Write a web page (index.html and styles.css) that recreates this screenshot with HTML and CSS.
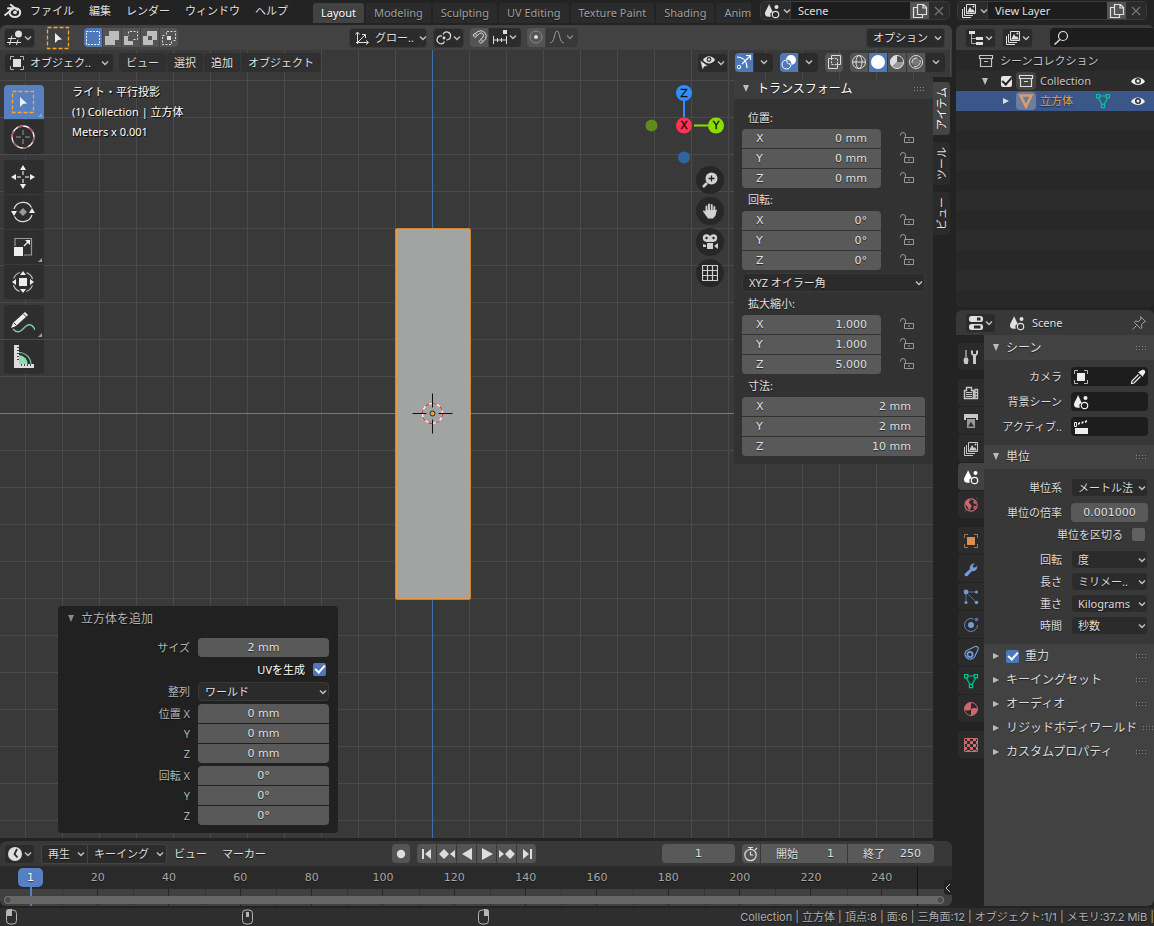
FILE: index.html
```html
<!DOCTYPE html>
<html lang="ja">
<head>
<meta charset="utf-8">
<title>Blender</title>
<link rel="stylesheet" href="styles.css">
</head>
<body>
<svg class="sprite" aria-hidden="true">
  <symbol id="chev" viewBox="0 0 8 8"><path d="M1 2.500 4 5.500 7 2.500" fill="none" stroke="currentColor" stroke-width="1.500"/></symbol>
  <symbol id="logo" viewBox="0 0 16 16"><path d="M1 11.500 8.500 5.500H3.500M6 2.500l6 4.600" fill="none" stroke="currentColor" stroke-width="1.700" stroke-linecap="round"/><ellipse cx="9.700" cy="9.300" rx="4.700" ry="4" fill="none" stroke="currentColor" stroke-width="1.900"/><circle cx="9.800" cy="9.200" r="1.700" fill="currentColor"/></symbol>
  <symbol id="view3d" viewBox="0 0 16 16"><path d="M1 8.500h8M0 12.500h14M5 5.500 2.500 15M11 9.500 9.500 15" fill="none" stroke="currentColor"/><circle cx="11.500" cy="4" r="3.500" fill="currentColor"/></symbol>
  <symbol id="selbox" viewBox="0 0 24 24"><rect x="1.500" y="1.500" width="21" height="21" fill="none" stroke="#f9a62c" stroke-width="1.300" stroke-dasharray="4 2"/><path d="M9 7v10l3-3 4-.5z" fill="#eee"/></symbol>
  <symbol id="m1" viewBox="0 0 16 16"><rect x="1.500" y="1.500" width="13" height="13" fill="none" stroke="currentColor" stroke-dasharray="2 1.250"/></symbol>
  <symbol id="m2" viewBox="0 0 16 16"><path d="M1 15V6h4V1h10v9h-4v5z" fill="#bdbdbd"/></symbol>
  <symbol id="m3" viewBox="0 0 16 16"><path d="M10.500 9.500h4v-8h-9v4" fill="none" stroke="currentColor" stroke-dasharray="2 1.500"/><path d="M1 15V6h4v5h5v4z" fill="#bdbdbd"/></symbol>
  <symbol id="m4" viewBox="0 0 16 16"><path d="M1 15V6h4V1h10v9h-4v5zM6 6v4h4V6z" fill="#bdbdbd" fill-rule="evenodd"/></symbol>
  <symbol id="m5" viewBox="0 0 16 16"><path d="M5.500 4.500v-3h9v9h-3M10.500 11.500v3h-9v-9h3" fill="none" stroke="currentColor" stroke-dasharray="2 1.500"/><path d="M6 6h4v4H6z" fill="currentColor"/></symbol>
  <symbol id="orient" viewBox="0 0 16 16"><path d="M3.500 14V3M2 12.500h12M4 12l7-7M1.500 4.500l2-2.500 2 2.500M12 10.500l2.500 2-2.500 2M8 4.500h3.500V8" fill="none" stroke="currentColor"/></symbol>
  <symbol id="pivot" viewBox="0 0 16 16"><g fill="none" stroke="currentColor" stroke-width="1.200"><path d="M8.500 11.500A3.900 3.900 0 1 1 6 6.100M7 4.500A3.900 3.900 0 1 1 10.500 9.800"/></g><circle cx="8" cy="8" r="1.400" fill="currentColor"/></symbol>
  <symbol id="magnet" viewBox="0 0 16 16"><path d="M2 6 7 2.500a5.500 5.500 0 0 1 7.500 7.500L10 14.500 8 12.500l4-4.500a2.500 2.500 0 0 0-3.500-3.500L4 8.500zM4 4.500l2 2M10 10.500l2 2" fill="none" stroke="currentColor"/></symbol>
  <symbol id="snapinc" viewBox="0 0 16 16"><path d="M1 11h14M1.500 7v8M5.500 9v4M9.500 9v4M14.500 7v8" stroke="currentColor"/><path d="M11 1h4v4h-4z" fill="currentColor"/></symbol>
  <symbol id="prop" viewBox="0 0 16 16"><circle cx="8" cy="8" r="6" fill="none" stroke="#8b8b8b"/><circle cx="8" cy="8" r="2" fill="currentColor"/></symbol>
  <symbol id="falloff" viewBox="0 0 16 16"><path d="M1 14c5 0 4-12 7-12s2 12 7 12" fill="none" stroke="currentColor"/></symbol>
  <symbol id="objmode" viewBox="0 0 16 16"><path d="M4 4h8v8H4z" fill="currentColor"/><path d="M1.500 5V1.500H5M11 1.500h3.500V5M14.500 11v3.500H11M5 14.500H1.500V11" fill="none" stroke="currentColor" opacity=".75"/></symbol>
  <symbol id="vis" viewBox="0 0 16 16"><path d="M3 5c3-5 9-5 12 0-3 4.500-9 4.500-12 0z" fill="currentColor"/><circle cx="9" cy="4.500" r="2.400" fill="#2b2b2b"/><circle cx="9" cy="4.500" r="1.200" fill="currentColor"/><path d="M0 5l8 6-3.500.500L2.500 15z" fill="currentColor" stroke="#2b2b2b" stroke-width=".6"/></symbol>
  <symbol id="gizmo" viewBox="0 0 16 16"><path d="M1 3c6 0 10 4 10 11M6 10l8-8M10 1.500h4.500V6" fill="none" stroke="currentColor" stroke-width="1.200"/><circle cx="3" cy="13" r="1.700" fill="none" stroke="currentColor"/></symbol>
  <symbol id="overlay" viewBox="0 0 16 16"><circle cx="10" cy="6" r="5" fill="currentColor"/><circle cx="5.500" cy="10.500" r="4.500" fill="none" stroke="currentColor"/><path d="M5.200 6a4.500 4.500 0 0 1 4.800 5" fill="none" stroke="#5078b9"/><circle cx="8" cy="8" r="1.600" fill="#5078b9"/></symbol>
  <symbol id="xray" viewBox="0 0 16 16"><path d="M5.500 1.500h9v9h-3v4h-9v-10h3z" fill="none" stroke="currentColor"/><path d="M5.500 4.500h6v6h-6z" fill="none" stroke="currentColor" stroke-dasharray="2 1.200"/></symbol>
  <symbol id="wire" viewBox="0 0 16 16"><g fill="none" stroke="currentColor"><circle cx="8" cy="8" r="6.500"/><ellipse cx="8" cy="8" rx="3" ry="6.500"/><path d="M1.500 8h13"/></g></symbol>
  <symbol id="solid" viewBox="0 0 16 16"><circle cx="8" cy="8" r="7" fill="#fff"/></symbol>
  <symbol id="matprev" viewBox="0 0 16 16"><circle cx="8" cy="8" r="6.500" fill="none" stroke="currentColor"/><path d="M8 8V1.500A6.500 6.500 0 0 0 3 12.500z" fill="currentColor"/><path d="M8 8h6.500A6.500 6.500 0 0 1 3 12.500z" fill="currentColor" opacity=".5"/></symbol>
  <symbol id="rend" viewBox="0 0 16 16"><circle cx="8" cy="8" r="6.500" fill="none" stroke="currentColor"/><circle cx="7.500" cy="7.500" r="4" fill="#777"/><path d="M4 9a4.500 4.500 0 0 1 5-5M12 6a5 5 0 0 1-6 6.500" fill="none" stroke="currentColor"/></symbol>
  <symbol id="scene" viewBox="0 0 16 16"><path d="M5 1 9 9.500C6 9 6 11.500 7 13.500 3 14.500 1 13 1 10.500 1 8 4 5 5 1z" fill="currentColor"/><circle cx="11.500" cy="11.500" r="3.200" fill="none" stroke="currentColor" stroke-width="1.200"/><circle cx="12.500" cy="4" r="2" fill="currentColor"/></symbol>
  <symbol id="layers" viewBox="0 0 16 16"><path d="M5.500 1.500h9v9h-9zM3.500 4v8.500H12M1.500 6v8.500H10" fill="none" stroke="currentColor"/><path d="M6 9.500 9 4l2 3 1-1 2 3.500z" fill="currentColor"/><circle cx="12.500" cy="3.500" r="1" fill="currentColor"/></symbol>
  <symbol id="copy" viewBox="0 0 16 16"><path d="M5.500 1.500h6l3 3v7h-9zM11 1.500V5h3.500M5.500 4.500h-4v10h9v-3" fill="none" stroke="currentColor" stroke-width="1.200"/></symbol>
  <symbol id="x" viewBox="0 0 16 16"><path d="M4 4l8 8M12 4l-8 8" stroke="#777" stroke-width="1.200"/></symbol>
  <symbol id="tree" viewBox="0 0 16 16"><path d="M1 1h6v3H1zM8 7h7v3H8zM8 12h7v3H8z" fill="currentColor"/><path d="M3.500 4v9.500H8M3.500 8.500H8" fill="none" stroke="currentColor" opacity=".7"/></symbol>
  <symbol id="search" viewBox="0 0 16 16"><circle cx="10" cy="6" r="4.500" fill="none" stroke="currentColor" stroke-width="1.200"/><path d="M7 9.500 1.500 14.500" stroke="currentColor" stroke-width="1.500"/></symbol>
  <symbol id="coll" viewBox="0 0 16 16"><path d="M1.500 2.500h13v3h-13zM2.500 5.500h11v8h-11zM6 8.500h4" fill="none" stroke="currentColor" stroke-width="1.200"/></symbol>
  <symbol id="eye" viewBox="0 0 16 16"><path d="M1 8.500c3-5.500 11-5.500 14 0-3 4.500-11 4.500-14 0z" fill="currentColor"/><circle cx="8" cy="8" r="3" fill="#2e2e38"/><circle cx="8" cy="8" r="1.500" fill="currentColor"/></symbol>
  <symbol id="mesh" viewBox="0 0 16 16"><g fill="none" stroke="#00c798" stroke-width="1.200"><path d="M5 3h6M3.300 5 7 11.500M12.700 5 9 11.500"/><path d="M1.500 1.500h3.300v3.300H1.500zM11.200 1.500h3.300v3.300h-3.300zM6.400 11.400h3.200v3.200H6.400z"/></g></symbol>
  <symbol id="objmesh" viewBox="0 0 16 16"><path d="M2.500 2.500h11L8 13.500z" fill="none" stroke="#dd9a6c" stroke-width="2.600"/></symbol>
  <symbol id="lock" viewBox="0 0 16 16"><path d="M1.500 5.500V5a2.500 2.500 0 0 1 5 0v2.500M5.500 7.500h9v5h-9zM10 9v2" fill="none" stroke="currentColor"/></symbol>
  <symbol id="props" viewBox="0 0 16 16"><rect x="1" y="1" width="14" height="6" rx="2.500" fill="currentColor"/><rect x="1" y="9" width="14" height="6" rx="2.500" fill="currentColor"/><path d="M9 2.500h3.500v3H9zM6 10.500h6.500v3H6z" fill="#2b2b2b"/></symbol>
  <symbol id="pin" viewBox="0 0 16 16"><path d="M9.500 1.500l5 5-1.500.5-2.500 2.500.5 3-1.500 1-6-6 1-1.500 3 .5L10 4zM5.500 10.500l-4 4" fill="none" stroke="#a0a0a0"/></symbol>
  <symbol id="drop" viewBox="0 0 16 16"><path d="M8.500 5.500 2 12l-.5 2.500L4 14l6.500-6.500" fill="none" stroke="currentColor" stroke-width="1.200"/><path d="M8 3l1.200-.500L12 1c2-1 4 1 3 3l-1.800 2.500L13 8z" fill="currentColor"/></symbol>
  <symbol id="clap" viewBox="0 0 16 16"><path d="M1.500 7.500v-4h2v4z" fill="none" stroke="currentColor"/><path d="M2 9h13v6H2zM5 4l2-1v2L5 6zM8.500 3l2-1v2l-2 1zM12 2l2-1v2l-2 1z" fill="currentColor"/></symbol>
  <symbol id="tools" viewBox="0 0 16 16"><path d="M3 1v7" stroke="currentColor" stroke-width="1.200"/><path d="M1.500 8.500h3L5.500 11l-.7 4H1.300L.5 11z" fill="currentColor"/><path d="M8 1v4l2 2v8h3V7l2-2V1l-2 1v3h-3V2z" fill="currentColor"/></symbol>
  <symbol id="camback" viewBox="0 0 16 16"><path d="M1.500 5.500h2v-3h5v3h2v8h-9zM12 4.500h2.500v9H12z" fill="none" stroke="currentColor" stroke-width="1.400"/><path d="M3 7.500h6M3 9.500h6M3 11.500h6M12 7.500h2M12 10.500h2" stroke="currentColor"/></symbol>
  <symbol id="printer" viewBox="0 0 16 16"><path d="M1 1h14v6h-2V5H3v2H1z" fill="currentColor"/><path d="M4 6h8v9H4z" fill="currentColor" opacity=".7"/><path d="M5 13.500 8 9l3 4.500z" fill="#2b2b2b"/></symbol>
  <symbol id="world" viewBox="0 0 16 16"><circle cx="8" cy="8" r="6.200" fill="none" stroke="currentColor" stroke-width="1.200"/><path d="M3 4c1-1.500 4-2 4-.5L5.500 5.500 7 7l1.500 2L7 12l-1 1-1-3-2.500-2.500zM11 3.500l2 2-.5 1.500-2-1zM11 9l2 .5-1.500 2.500-1-1zM13 2l1.500-1M1.500 15 3 13" fill="currentColor" stroke="currentColor" stroke-width=".4"/></symbol>
  <symbol id="wrench" viewBox="0 0 16 16"><path d="M2 12.500 7 8c-.8-3 1.500-6 5-5.500L9.500 5l1.500 2 3-2c1 3-2 6-5 5L4.500 15C2.500 16 .5 14 2 12.500z" fill="currentColor"/></symbol>
  <symbol id="part" viewBox="0 0 16 16"><path d="M3 3h11M3 3v11M3 3l11 11" stroke="currentColor" opacity=".6"/><circle cx="3" cy="3" r="2.400" fill="currentColor"/><circle cx="13.500" cy="3" r="1.500" fill="currentColor"/><circle cx="3" cy="13.500" r="1.500" fill="currentColor"/><circle cx="13.500" cy="13.500" r="1.800" fill="currentColor"/></symbol>
  <symbol id="phys" viewBox="0 0 16 16"><path d="M10.500 2a6.500 6.500 0 1 0 4 6" fill="none" stroke="currentColor" opacity=".8"/><circle cx="8" cy="8" r="3" fill="currentColor"/><circle cx="13.500" cy="2.500" r="1.800" fill="currentColor" opacity=".7"/></symbol>
  <symbol id="constr" viewBox="0 0 16 16"><path d="M3 6 12 1.500a2.300 2.300 0 0 1 3 3L11.500 12A5 5 0 1 1 3 6z" fill="none" stroke="currentColor" stroke-width="1.200"/><circle cx="7" cy="9.500" r="2.600" fill="none" stroke="currentColor" stroke-width="1.800"/></symbol>
  <symbol id="mat" viewBox="0 0 16 16"><circle cx="8" cy="8" r="6.500" fill="none" stroke="currentColor"/><path d="M8 8V1.500A6.500 6.500 0 0 0 1.500 8C3 10 6 10 8 8zM8 8v6.500A6.500 6.500 0 0 0 14.500 8C13 6.500 10 6.500 8 8z" fill="currentColor"/></symbol>
  <symbol id="tex" viewBox="0 0 16 16"><path d="M1.500 1.500h13v13h-13z" fill="none" stroke="currentColor"/><path d="M4 1h3v3H4zM10 1h3v3h-3zM1 4h3v3H1zM7 4h3v3H7zM13 4h2v3h-2zM4 7h3v3H4zM10 7h3v3h-3zM1 10h3v3H1zM7 10h3v3H7zM13 10h2v3h-2zM4 13h3v2H4zM10 13h3v2h-3z" fill="currentColor"/></symbol>
  <symbol id="clock" viewBox="0 0 16 16"><circle cx="8" cy="8" r="7" fill="currentColor"/><path d="M10 3 7.500 8l3 3.500" fill="none" stroke="#2b2b2b" stroke-width="1.800"/></symbol>
  <symbol id="watch" viewBox="0 0 16 16"><circle cx="7.500" cy="9" r="5.700" fill="none" stroke="currentColor" stroke-width="1.200"/><path d="M5 1.500h5M7.500 1.500V3M7.500 5.500V9h3M12 4l2-2" fill="none" stroke="currentColor" stroke-width="1.200"/></symbol>
</svg>

<div class="app">
  <header class="topbar">
    <svg class="ic logo"><use href="#logo"/></svg>
    <nav class="menus">
      <button>ファイル</button><button>編集</button><button>レンダー</button><button>ウィンドウ</button><button>ヘルプ</button>
    </nav>
    <nav class="tabs">
      <button class="on">Layout</button><button>Modeling</button><button>Sculpting</button><button>UV Editing</button><button>Texture Paint</button><button>Shading</button><button>Animation</button>
    </nav>
    <div class="idbox">
      <button class="pick" aria-label="シーン"><svg class="ic"><use href="#scene"/></svg><svg class="chev"><use href="#chev"/></svg></button>
      <input aria-label="シーン名" value="Scene">
      <button class="dup" aria-label="複製"><svg class="ic"><use href="#copy"/></svg></button>
      <button class="del" aria-label="削除"><svg class="ic"><use href="#x"/></svg></button>
    </div>
    <div class="idbox">
      <button class="pick" aria-label="ビューレイヤー"><svg class="ic"><use href="#layers"/></svg><svg class="chev"><use href="#chev"/></svg></button>
      <input aria-label="ビューレイヤー名" value="View Layer">
      <button class="dup" aria-label="複製"><svg class="ic"><use href="#copy"/></svg></button>
      <button class="del" aria-label="削除"><svg class="ic"><use href="#x"/></svg></button>
    </div>
  </header>

  <main class="work">
    <div class="left">
      <section class="view3d">
        <div class="bar tool-bar">
          <button class="dd icon-dd" aria-label="エディタータイプ"><svg class="ic"><use href="#view3d"/></svg><svg class="chev"><use href="#chev"/></svg></button>
          <svg class="active-tool"><use href="#selbox"/></svg>
          <div class="grp modes">
            <button class="on" aria-label="設定"><svg class="ic"><use href="#m1"/></svg></button><button aria-label="拡張"><svg class="ic"><use href="#m2"/></svg></button><button aria-label="減算"><svg class="ic"><use href="#m3"/></svg></button><button aria-label="反転"><svg class="ic"><use href="#m4"/></svg></button><button aria-label="交差"><svg class="ic"><use href="#m5"/></svg></button>
          </div>
          <div class="transforms">
            <button class="dd orient"><svg class="ic"><use href="#orient"/></svg><span>グロー..</span><svg class="chev"><use href="#chev"/></svg></button>
            <button class="dd icon-dd" aria-label="ピボット"><svg class="ic"><use href="#pivot"/></svg><svg class="chev"><use href="#chev"/></svg></button>
            <div class="grp"><button aria-label="スナップ"><svg class="ic"><use href="#magnet"/></svg></button><button class="dd wide" aria-label="スナップ先"><svg class="ic"><use href="#snapinc"/></svg><svg class="chev"><use href="#chev"/></svg></button></div>
            <div class="grp faded"><button aria-label="プロポーショナル編集"><svg class="ic"><use href="#prop"/></svg></button><button class="dd wide" aria-label="減衰"><svg class="ic"><use href="#falloff"/></svg><svg class="chev"><use href="#chev"/></svg></button></div>
          </div>
          <button class="dd options"><span>オプション</span><svg class="chev"><use href="#chev"/></svg></button>
        </div>

        <div class="canvas">
          <svg class="scene" aria-hidden="true">
            <defs><pattern id="grid" x="25" y="30" width="37" height="37" patternUnits="userSpaceOnUse"><path d="M.5 0v37M0 .5h37" stroke="#4a4a4a" fill="none"/></pattern></defs>
            <rect width="100%" height="100%" fill="#393939"/>
            <rect width="100%" height="100%" fill="url(#grid)"/>
            <path d="M0 363.500h2000" stroke="#74892f"/>
            <path d="M432.500 0v2000" stroke="#3c70af"/>
            <rect x="396" y="179" width="74" height="370" rx="1" fill="#a2a4a3" stroke="#f59a24" stroke-width="1.600"/>
            <g transform="translate(432.500 363.500)" fill="none">
              <circle r="10" stroke="#fff" stroke-width="1.200"/><circle r="10" stroke="#e0262f" stroke-width="1.200" stroke-dasharray="4 3.850"/>
              <path d="M-20 0h14M6 0h14M0-20v14M0 6v14" stroke="#111"/>
              <circle r="2.500" fill="#f79f2c" stroke="#222"/>
            </g>
          </svg>

          <div class="bar view-bar">
            <button class="dd mode"><svg class="ic"><use href="#objmode"/></svg><span>オブジェク..</span><svg class="chev"><use href="#chev"/></svg></button>
            <nav class="pills"><button>ビュー</button><button>選択</button><button>追加</button><button>オブジェクト</button></nav>
            <div class="shading">
              <button class="dd icon-dd" aria-label="可視性"><svg class="ic"><use href="#vis"/></svg><svg class="chev"><use href="#chev"/></svg></button>
              <div class="grp"><button class="on" aria-label="ギズモ"><svg class="ic"><use href="#gizmo"/></svg></button><button class="dd only" aria-label="ギズモ設定"><svg class="chev"><use href="#chev"/></svg></button></div>
              <div class="grp"><button class="on" aria-label="オーバーレイ"><svg class="ic"><use href="#overlay"/></svg></button><button class="dd only" aria-label="オーバーレイ設定"><svg class="chev"><use href="#chev"/></svg></button></div>
              <div class="grp"><button aria-label="透過"><svg class="ic"><use href="#xray"/></svg></button></div>
              <div class="grp"><button aria-label="ワイヤーフレーム"><svg class="ic"><use href="#wire"/></svg></button><button class="on" aria-label="ソリッド"><svg class="ic"><use href="#solid"/></svg></button><button aria-label="マテリアル"><svg class="ic"><use href="#matprev"/></svg></button><button aria-label="レンダー"><svg class="ic"><use href="#rend"/></svg></button><button class="dd only" aria-label="シェーディング設定"><svg class="chev"><use href="#chev"/></svg></button></div>
            </div>
          </div>

          <div class="stage">
            <div class="toolbox">
              <div class="tset">
                <button class="on more" aria-label="選択"><svg><use href="#selbox"/></svg></button>
                <button aria-label="カーソル"><svg viewBox="0 0 24 24"><g fill="none"><circle cx="12" cy="12" r="11" stroke="#eee" stroke-width="1.300"/><circle cx="12" cy="12" r="11" stroke="#b5474d" stroke-width="1.300" stroke-dasharray="5.760 5.760"/><path d="M12 5v5M12 14v5M5 12h5M14 12h5" stroke="#999"/></g></svg></button>
              </div>
              <div class="tset">
                <button aria-label="移動"><svg viewBox="0 0 24 24"><path d="M12 0l3 5H9zM12 24l3-5H9zM0 12l5-3v6zM24 12l-5-3v6z" fill="#eee"/><path d="M12 6v4M12 14v4M6 12h4M14 12h4" stroke="#bbb" stroke-width="1.500"/></svg></button>
                <button aria-label="回転"><svg viewBox="0 0 24 24"><path d="M3 9a9.500 9.500 0 0 1 17.500-1.500M21 15A9.500 9.500 0 0 1 3.500 16.500" fill="none" stroke="#ddd" stroke-width="1.200"/><path d="M0 11h6l-3 5zM18 13h6l-3-5z" fill="#eee"/><path d="M12 8l4 4-4 4-4-4z" fill="#999"/></svg></button>
                <button class="more" aria-label="拡大縮小"><svg viewBox="0 0 24 24"><path d="M4 11V3.500h16.500V20H13" fill="none" stroke="#999" stroke-width="1.200"/><path d="M3 12h9v9H3zM19 5v5l-5-5z" fill="#eee"/><path d="M13 11l4-4" stroke="#eee" stroke-width="1.300"/></svg></button>
                <button aria-label="トランスフォーム"><svg viewBox="0 0 24 24"><circle cx="12" cy="12" r="10" fill="none" stroke="#bbb" stroke-width="1.200" stroke-dasharray="9 6.700" stroke-dashoffset="-3.400"/><path d="M8 8h8v8H8zM12 1l3 4H9zM12 23l3-4H9zM1 12l4-3v6zM23 12l-4-3v6z" fill="#eee"/></svg></button>
              </div>
              <div class="tset">
                <button class="more" aria-label="アノテート"><svg viewBox="0 0 24 24"><path d="M2 19c5 6 9 1 12-2s7-4 10 3" fill="none" stroke="#7fc79f" stroke-width="1.400"/><path d="M0 18l2-5L14 2l3 3L5 16z" fill="#eee"/><path d="M3 13l2.500 2.500M12.500 4l3 3" stroke="#333"/></svg></button>
                <button aria-label="メジャー"><svg viewBox="0 0 24 24"><path d="M8 20V10a10 10 0 0 1 9 10z" fill="#8fdcb4"/><path d="M8 7.500A12 12 0 0 1 20 19" fill="none" stroke="#7fc79f" stroke-width="1.200"/><path d="M3 0h5v19h15v4H3z" fill="#ddd"/><path d="M6 2.500h2M6 5.500h2M6 8.500h2M6 11.500h2M6 14.500h2M10.500 19v2M13.500 19v2M16.500 19v2M19.500 19v2" stroke="#444"/></svg></button>
              </div>
            </div>
            <div class="info"><p>ライト・平行投影</p><p>(1) Collection | 立方体</p><p>Meters x 0.001</p></div>
            <div class="navs">
              <svg class="axes" viewBox="0 0 80 82" role="img" aria-label="軸">
                <path d="M40 12v24" stroke="#2e8fff" stroke-width="2"/><path d="M50 44.500h14" stroke="#8bdc00" stroke-width="2"/>
                <circle cx="7.500" cy="44.500" r="6" fill="#5f8a1c"/><circle cx="40" cy="76.500" r="6" fill="#30659f"/>
                <circle cx="40" cy="12" r="8" fill="#2e8fff"/><circle cx="40" cy="44.500" r="8" fill="#ff3352"/><circle cx="72" cy="44.500" r="8" fill="#8bdc00"/>
                <g class="axis-names"><text x="40" y="16">Z</text><text x="40" y="48">X</text><text x="72" y="48">Y</text></g>
              </svg>
              <button class="nav" aria-label="ズーム"><svg class="ic"><g fill="none" stroke="#d0d0d0"><path d="M5 11l-4 4" stroke-width="2.500"/></g><circle cx="9.500" cy="6.500" r="6" fill="#d0d0d0"/><path d="M9.500 3.500v6M6.500 6.500h6" stroke="#222" stroke-width="1.300"/></svg></button>
              <button class="nav" aria-label="移動"><svg class="ic"><path d="M4.500 9V3.500M7 8V1.500M9.700 8V2M12.300 9V4" stroke="#d0d0d0" stroke-width="1.900" stroke-linecap="round"/><path d="M3.600 7h9.600l1.800-.6-1.500 6-2.500 3H6L1 8.500C1 7 2.500 7 3.600 9z" fill="#d0d0d0"/></svg></button>
              <button class="nav" aria-label="カメラ"><svg class="ic"><g fill="#d0d0d0"><circle cx="4.500" cy="4" r="3.700"/><circle cx="11.500" cy="4" r="3.700"/><path d="M4 5h8v3H4zM5 9h6v6H5zM12 12l4-3v6zM1 10l3 1v2H1z"/></g><circle cx="4.500" cy="4" r="1.200" fill="#222"/><circle cx="11.500" cy="4" r="1.200" fill="#222"/></svg></button>
              <button class="nav" aria-label="投影"><svg class="ic"><path d="M.5.5h15v15H.5zM5.500.5v15M10.500.5v15M.5 5.500h15M.5 10.500h15" fill="none" stroke="#d0d0d0" stroke-width="1.200"/></svg></button>
            </div>
            <aside class="npanel">
              <h2><svg class="tri"><path d="M1 0h6L4 7z"/></svg>トランスフォーム<i class="grip"></i></h2>
              <div class="nbody">
                <h3>位置:</h3>
                <div class="locked">
                  <div class="stack"><label>X<input value="0 mm"></label><label>Y<input value="0 mm"></label><label>Z<input value="0 mm"></label></div>
                  <div class="locks"><button aria-label="Xロック"><svg class="ic"><use href="#lock"/></svg></button><button aria-label="Yロック"><svg class="ic"><use href="#lock"/></svg></button><button aria-label="Zロック"><svg class="ic"><use href="#lock"/></svg></button></div>
                </div>
                <h3>回転:</h3>
                <div class="locked">
                  <div class="stack"><label>X<input value="0°"></label><label>Y<input value="0°"></label><label>Z<input value="0°"></label></div>
                  <div class="locks"><button aria-label="Xロック"><svg class="ic"><use href="#lock"/></svg></button><button aria-label="Yロック"><svg class="ic"><use href="#lock"/></svg></button><button aria-label="Zロック"><svg class="ic"><use href="#lock"/></svg></button></div>
                </div>
                <div class="sel euler"><select aria-label="回転モード"><option>XYZ オイラー角</option></select><svg class="chev"><use href="#chev"/></svg></div>
                <h3>拡大縮小:</h3>
                <div class="locked">
                  <div class="stack"><label>X<input value="1.000"></label><label>Y<input value="1.000"></label><label>Z<input value="5.000"></label></div>
                  <div class="locks"><button aria-label="Xロック"><svg class="ic"><use href="#lock"/></svg></button><button aria-label="Yロック"><svg class="ic"><use href="#lock"/></svg></button><button aria-label="Zロック"><svg class="ic"><use href="#lock"/></svg></button></div>
                </div>
                <h3>寸法:</h3>
                <div class="stack"><label>X<input value="2 mm"></label><label>Y<input value="2 mm"></label><label>Z<input value="10 mm"></label></div>
              </div>
            </aside>
            <nav class="vtabs"><button class="on">アイテム</button><button>ツール</button><button>ビュー</button></nav>
          </div>

          <section class="redo">
            <h2><svg class="tri"><path d="M1 0h6L4 7z"/></svg>立方体を追加</h2>
            <div class="rrow"><label for="size">サイズ</label><input id="size" class="field" value="2 mm"></div>
            <div class="rcheck"><label for="uv">UVを生成</label><input id="uv" type="checkbox" checked></div>
            <div class="rrow"><label for="align">整列</label><div class="sel"><select id="align"><option>ワールド</option></select><svg class="chev"><use href="#chev"/></svg></div></div>
            <div class="rgroup">
              <label for="lx">位置 X</label><input id="lx" class="field" value="0 mm"><label for="ly">Y</label><input id="ly" class="field" value="0 mm"><label for="lz">Z</label><input id="lz" class="field" value="0 mm">
            </div>
            <div class="rgroup">
              <label for="rx">回転 X</label><input id="rx" class="field" value="0°"><label for="ry">Y</label><input id="ry" class="field" value="0°"><label for="rz">Z</label><input id="rz" class="field" value="0°">
            </div>
          </section>
        </div>
      </section>

      <section class="timeline">
        <div class="bar tl-bar">
          <button class="dd icon-dd" aria-label="タイムライン"><svg class="ic"><use href="#clock"/></svg><svg class="chev"><use href="#chev"/></svg></button>
          <div class="grp tlmenus"><button class="dd"><span>再生</span><svg class="chev"><use href="#chev"/></svg></button><button class="dd"><span>キーイング</span><svg class="chev"><use href="#chev"/></svg></button></div>
          <nav class="plain"><button>ビュー</button><button>マーカー</button></nav>
          <div class="transport">
            <div class="grp"><button aria-label="自動キー"><svg class="ic"><circle cx="8" cy="8" r="4.200" fill="currentColor"/></svg></button></div>
            <div class="grp play">
              <button aria-label="先頭"><svg class="ic"><path d="M3 3h2v10H3zM12 3v10L6 8z" fill="currentColor"/></svg></button>
              <button aria-label="前のキー"><svg class="ic"><path d="M5 3l5 5-5 5-5-5zM16 4v8l-5-4z" fill="currentColor"/></svg></button>
              <button aria-label="逆再生"><svg class="ic"><path d="M13 2v12L3 8z" fill="currentColor"/></svg></button>
              <button aria-label="再生"><svg class="ic"><path d="M3 2v12l11-6z" fill="currentColor"/></svg></button>
              <button aria-label="次のキー"><svg class="ic"><path d="M11 3l5 5-5 5-5-5zM0 4v8l5-4z" fill="currentColor"/></svg></button>
              <button aria-label="末尾"><svg class="ic"><path d="M11 3h2v10h-2zM4 3v10l6-5z" fill="currentColor"/></svg></button>
            </div>
          </div>
          <div class="frames">
            <input class="field cur" aria-label="現在のフレーム" value="1">
            <div class="grp range"><button aria-label="プレビュー範囲"><svg class="ic"><use href="#watch"/></svg></button><label>開始<input value="1"></label><label>終了<input value="250"></label></div>
          </div>
        </div>
        <div class="ruler">
          <div class="marks"><span>20</span><span>40</span><span>60</span><span>80</span><span>100</span><span>120</span><span>140</span><span>160</span><span>180</span><span>200</span><span>220</span><span>240</span></div>
          <span class="playhead">1</span>
          <div class="scroll"><i></i><i></i></div>
          <button class="expand" aria-label="サイドバー"><svg class="chev"><path d="M6 0 2 4l4 4" fill="none" stroke="#bbb"/></svg></button>
        </div>
      </section>
    </div>

    <div class="right">
      <section class="outliner">
        <div class="bar">
          <button class="dd icon-dd" aria-label="アウトライナー"><svg class="ic"><use href="#tree"/></svg><svg class="chev"><use href="#chev"/></svg></button>
          <button class="dd icon-dd" aria-label="表示モード"><svg class="ic"><use href="#layers"/></svg><svg class="chev"><use href="#chev"/></svg></button>
          <label class="find"><svg class="ic"><use href="#search"/></svg><input aria-label="検索"></label>
        </div>
        <div class="tree">
          <div class="row root"><svg class="ic"><use href="#coll"/></svg><span>シーンコレクション</span></div>
          <div class="row child"><svg class="tri"><path d="M1 1h6L4 8z"/></svg><input type="checkbox" class="light" checked aria-label="Collectionを有効化"><span class="tile"><svg class="ic"><use href="#coll"/></svg></span><span>Collection</span><svg class="ic eye"><use href="#eye"/></svg></div>
          <div class="row leaf"><svg class="tri"><path d="M1 1v6l6-3z"/></svg><span class="tile"><svg class="ic"><use href="#objmesh"/></svg></span><span>立方体</span><svg class="ic data"><use href="#mesh"/></svg><svg class="ic eye"><use href="#eye"/></svg></div>
        </div>
      </section>

      <section class="props">
        <div class="bar">
          <button class="dd icon-dd" aria-label="プロパティ"><svg class="ic"><use href="#props"/></svg><svg class="chev"><use href="#chev"/></svg></button>
          <svg class="ic ctx"><use href="#scene"/></svg><span>Scene</span>
          <button class="pin" aria-label="ピン"><svg class="ic"><use href="#pin"/></svg></button>
        </div>
        <div class="pmain">
          <nav class="ptabs">
            <button aria-label="ツール"><svg class="ic"><use href="#tools"/></svg></button>
            <button class="gap" aria-label="レンダー"><svg class="ic"><use href="#camback"/></svg></button>
            <button aria-label="出力"><svg class="ic"><use href="#printer"/></svg></button>
            <button aria-label="ビューレイヤー"><svg class="ic"><use href="#layers"/></svg></button>
            <button class="on" aria-label="シーン"><svg class="ic"><use href="#scene"/></svg></button>
            <button class="red" aria-label="ワールド"><svg class="ic"><use href="#world"/></svg></button>
            <button class="gap orange" aria-label="オブジェクト"><svg class="ic"><use href="#objmode"/></svg></button>
            <button class="blue" aria-label="モディファイアー"><svg class="ic"><use href="#wrench"/></svg></button>
            <button class="blue" aria-label="パーティクル"><svg class="ic"><use href="#part"/></svg></button>
            <button class="blue" aria-label="物理演算"><svg class="ic"><use href="#phys"/></svg></button>
            <button class="blue" aria-label="コンストレイント"><svg class="ic"><use href="#constr"/></svg></button>
            <button aria-label="データ"><svg class="ic"><use href="#mesh"/></svg></button>
            <button class="red" aria-label="マテリアル"><svg class="ic"><use href="#mat"/></svg></button>
            <button class="gap red" aria-label="テクスチャ"><svg class="ic"><use href="#tex"/></svg></button>
          </nav>
          <div class="panels">
            <h2><svg class="tri"><path d="M1 0h6L4 7z"/></svg>シーン<i class="grip"></i></h2>
            <div class="pbody roomy">
              <span>カメラ</span><button class="slot" aria-label="カメラ"><svg class="ic"><use href="#objmode"/></svg><svg class="ic end"><use href="#drop"/></svg></button>
              <span>背景シーン</span><button class="slot" aria-label="背景シーン"><svg class="ic"><use href="#scene"/></svg></button>
              <span>アクティブ..</span><button class="slot" aria-label="アクティブ"><svg class="ic"><use href="#clap"/></svg></button>
            </div>
            <h2><svg class="tri"><path d="M1 0h6L4 7z"/></svg>単位<i class="grip"></i></h2>
            <div class="pbody roomy units">
              <label for="us">単位系</label><div class="sel"><select id="us"><option>メートル法</option></select><svg class="chev"><use href="#chev"/></svg></div>
              <label for="sc">単位の倍率</label><input id="sc" class="field" value="0.001000">
            </div>
            <div class="sep"><label for="sp">単位を区切る</label><input id="sp" type="checkbox"></div>
            <div class="pbody tight">
              <label for="ur">回転</label><div class="sel"><select id="ur"><option>度</option></select><svg class="chev"><use href="#chev"/></svg></div>
              <label for="ul">長さ</label><div class="sel"><select id="ul"><option>ミリメー..</option></select><svg class="chev"><use href="#chev"/></svg></div>
              <label for="um">重さ</label><div class="sel"><select id="um"><option>Kilograms</option></select><svg class="chev"><use href="#chev"/></svg></div>
              <label for="ut">時間</label><div class="sel"><select id="ut"><option>秒数</option></select><svg class="chev"><use href="#chev"/></svg></div>
            </div>
            <h2><svg class="tri"><path d="M1 1v6l6-3z"/></svg><input type="checkbox" id="grav" checked><label for="grav">重力</label><i class="grip"></i></h2>
            <h2><svg class="tri"><path d="M1 1v6l6-3z"/></svg>キーイングセット<i class="grip"></i></h2>
            <h2><svg class="tri"><path d="M1 1v6l6-3z"/></svg>オーディオ<i class="grip"></i></h2>
            <h2><svg class="tri"><path d="M1 1v6l6-3z"/></svg>リジッドボディワールド<i class="grip"></i></h2>
            <h2><svg class="tri"><path d="M1 1v6l6-3z"/></svg>カスタムプロパティ<i class="grip"></i></h2>
          </div>
        </div>
      </section>
    </div>
  </main>

  <footer class="status">
    <div class="hints">
      <svg class="mouse" viewBox="0 0 12 16"><rect x=".5" y="1" width="10" height="14" rx="3.500"/><path class="fill" d="M0 3a3 3 0 0 1 3-3h3v7H0z"/></svg>
      <svg class="mouse" viewBox="0 0 12 16"><rect x=".5" y="1" width="10" height="14" rx="3.500"/><path class="fill" d="M4 3h3v5H4z"/></svg>
      <svg class="mouse" viewBox="0 0 12 16"><rect x=".5" y="1" width="10" height="14" rx="3.500"/><path class="fill" d="M6 0h2a3 3 0 0 1 3 3v4H6z"/></svg>
    </div>
    <span>Collection | 立方体 | 頂点:8 | 面:6 | 三角面:12 | オブジェクト:1/1 | メモリ:37.2 MiB |</span>
  </footer>
</div>
</body>
</html>
```
FILE: styles.css
```css
* { box-sizing: border-box; }

:root {
  --gap-bg: #232323;
  --header: #424242;
  --menu: #2b2b2b;
  --edge: #393939;
  --field: #595959;
  --blue: #5078b9;
  --text: #e0e0e0;
  --num: "DejaVu Sans", "Noto Sans CJK JP", sans-serif;
}

body {
  margin: 0;
  background: var(--gap-bg);
  color: var(--text);
  font: 11px/16px "Noto Sans", "Noto Sans CJK JP", sans-serif;
}

h2, h3, p { margin: 0; font-size: 11px; font-weight: 400; }

button, input, select {
  margin: 0;
  padding: 0;
  border: 0;
  border-radius: 0;
  background: none;
  color: inherit;
  font: inherit;
  text-shadow: inherit;
}

button { display: flex; align-items: center; white-space: nowrap; }
input { min-width: 0; }
svg { flex: none; }

.sprite { position: absolute; width: 0; height: 0; }
.ic { width: 16px; height: 16px; display: block; }
.chev { width: 8px; height: 8px; display: block; color: #c0c0c0; }
.tri { width: 8px; height: 8px; fill: #bdbdbd; }

.app {
  height: 100vh;
  display: grid;
  grid-template-rows: 25px 1fr 18px;
  grid-template-columns: minmax(0, 1fr);
  text-shadow: 0 1px 1px rgba(0, 0, 0, .6);
}

/* top bar */
.topbar { display: flex; align-items: center; padding: 0 7px 4px 4px; }
.topbar .logo { width: 18px; height: 18px; }
.menus { display: flex; gap: 15px; margin-left: 8px; flex: none; }
.tabs { display: flex; gap: 2px; align-self: stretch; padding-top: 3px; margin: 0 9px 0 25px; flex: 1; min-width: 0; overflow: hidden; height: 24px; }
.tabs button { padding: 0 8px; height: 20px; border-radius: 3px 3px 0 0; background: #2b2b2b; color: #a0a0a0; flex: none; }
.tabs .on { background: var(--header); color: #fff; }
.idbox { display: flex; width: 190px; height: 19px; border: 1px solid #3a3a3a; border-radius: 4px; background: #1d1d1d; flex: none; overflow: hidden; }
.idbox + .idbox { margin-left: 7px; }
.idbox .pick { width: 30px; background: var(--menu); gap: 3px; padding-left: 3px; border-right: 1px solid #3a3a3a; }
.idbox input { flex: 1; padding-left: 7px; }
.idbox .dup { width: 19px; background: #545454; justify-content: center; }
.idbox .del { width: 20px; background: #2b2b2b; justify-content: center; }

/* shared header widgets */
.bar { display: flex; align-items: center; height: 25px; padding: 0 7px 0 4px; background: var(--header); flex: none; }
.dd { height: 20px; background: var(--menu); border: 1px solid var(--edge); border-radius: 4px; padding: 0 4px; }
.dd .chev { margin-left: auto; }
.icon-dd { width: 31px; padding: 0 2px; }
.grp { display: flex; gap: 1px; border-radius: 4px; overflow: hidden; height: 19px; flex: none; }
.grp button { width: 18px; height: 19px; background: #545454; justify-content: center; color: #ddd; }
.grp .on { background: var(--blue); color: #fff; }
.grp .dd { background: var(--menu); border: 0; border-radius: 0; }
.grp .wide { width: 32px; justify-content: flex-start; padding: 0 4px 0 3px; }
.grp .only { width: 19px; padding: 0; }
.grp .only .chev { margin: 0; }

/* layout */
.work { display: flex; gap: 4px; min-height: 0; padding-bottom: 2px; }
.left { flex: 1; min-width: 0; display: flex; flex-direction: column; gap: 3px; }
.right { width: 198px; flex: none; display: flex; flex-direction: column; gap: 3px; }

/* 3D viewport */
.view3d { flex: 1; min-height: 0; display: flex; flex-direction: column; border-radius: 6px 6px 0 0; overflow: hidden; }
.active-tool { width: 24px; height: 24px; margin: 0 14px 0 11px; }
.transforms { display: flex; gap: 6px; margin-left: 171px; }
.orient { width: 78px; gap: 5px; }
.faded .chev { opacity: .55; }
.faded .dd { background: #383838; color: #999; }
.options { width: 79px; margin-left: auto; padding: 0 2px 0 6px; }
.canvas { position: relative; flex: 1; min-height: 0; }
.scene { position: absolute; inset: 0; width: 100%; height: 100%; }
.view-bar { position: relative; background: none; }
.mode { width: 110px; gap: 5px; }
.pills { display: flex; gap: 1px; margin-left: 5px; }
.pills button { height: 19px; padding: 0 7px; border-radius: 3px; background: #303030; }
.shading { display: flex; gap: 7px; margin-left: auto; }

.stage { position: relative; display: flex; align-items: flex-start; height: calc(100% - 27px); margin-top: 2px; }
.toolbox { display: flex; flex-direction: column; gap: 6px; padding: 8px 0 0 4px; }
.tset { display: grid; gap: 1px; border-radius: 4px; overflow: hidden; }
.tset button { position: relative; width: 40px; height: 34px; padding: 0 2px 1px 0; justify-content: center; background: #2e2e2e; }
.tset svg { width: 24px; height: 24px; }
.tset .on { background: #5680c2; }
.more::after { content: ""; position: absolute; right: 2px; bottom: 2px; border: 2px solid; border-color: transparent #a0a0a0 #a0a0a0 transparent; }
.info { padding: 5px 0 0 28px; line-height: 20px; color: #fff; text-shadow: 1px 1px 1px #000; }
.navs { margin-left: auto; padding: 4px 10px 0 0; display: flex; flex-direction: column; align-items: flex-end; gap: 3px; }
.axes { width: 80px; height: 82px; overflow: visible; }
.axis-names { font-size: 11px; font-family: "DejaVu Sans", sans-serif; text-anchor: middle; text-shadow: none; fill: #111; stroke: #111; stroke-width: .3; }
.nav { width: 28px; height: 28px; border-radius: 50%; background: #272727; justify-content: center; }
.navs .nav { flex: none; }

.npanel { width: 199px; margin-top: 2px; background: #323232; }
.npanel h2 { display: flex; align-items: center; height: 20px; gap: 7px; padding: 0 8px; background: #3c3c3c; color: #fff; font-size: 12px; }
.grip { width: 11px; height: 5px; margin-left: auto; flex: none; background: repeating-linear-gradient(90deg, transparent 0 1px, #3c3c3c 1px 3px), repeating-linear-gradient(#8c8c8c 0 1px, transparent 1px 3px); }
.nbody { padding: 7px 8px 8px; }
.nbody h3 { height: 23px; line-height: 23px; padding-left: 6px; }
.locked { display: flex; justify-content: space-between; }
.locked .stack { width: 139px; }
.locks { display: grid; align-content: start; width: 26px; gap: 4px; padding-top: 1px; color: #9a9a9a; }
.stack { display: grid; gap: 1px; border-radius: 4px; overflow: hidden; }
.stack label { display: flex; align-items: center; height: 19px; padding: 0 14px; background: var(--field); font-family: var(--num); }
.stack input { flex: 1; width: 60px; text-align: right; }
.sel { position: relative; height: 19px; }
.sel select { appearance: none; display: block; width: 100%; height: 100%; padding: 0 6px; background: var(--menu); border: 1px solid var(--edge); border-radius: 4px; }
.sel .chev { position: absolute; right: 2px; top: 6px; pointer-events: none; }
.euler { margin-top: 3px; }

.vtabs { width: 19px; align-self: stretch; background: var(--gap-bg); padding-top: 5px; display: flex; flex-direction: column; gap: 7px; }
.vtabs button { writing-mode: vertical-rl; text-orientation: sideways; transform: rotate(180deg); width: 17px; padding: 5px 0; line-height: 17px; justify-content: center; background: #2b2b2b; border-radius: 4px 0 0 4px; }
.vtabs .on { background: #454545; color: #fff; }

.redo { position: absolute; left: 58px; bottom: 5px; width: 280px; padding: 0 9px 8px; background: #212121; border-radius: 4px; display: grid; gap: 3px; color: #b4b4b4; }
.redo h2 { display: flex; align-items: center; gap: 6px; height: 25px; margin-bottom: 4px; font-size: 12px; }
.redo .tri { fill: #888; }
.rrow, .rgroup { display: grid; grid-template-columns: 1fr 131px; column-gap: 8px; align-items: center; text-align: right; }
.rgroup { row-gap: 1px; }
.field { width: 100%; height: 19px; background: var(--field); border-radius: 4px; text-align: center; color: var(--text); font-family: var(--num); }
.rgroup .field { border-radius: 0; }
.rgroup .field:first-of-type { border-radius: 4px 4px 0 0; }
.rgroup .field:last-of-type { border-radius: 0 0 4px 4px; }
.redo select { color: var(--text); }
.rcheck { display: flex; justify-content: flex-end; align-items: center; gap: 8px; height: 19px; padding-right: 3px; color: #fff; }

input[type="checkbox"] { appearance: none; width: 13px; height: 13px; flex: none; border-radius: 2px; background: #606060; }
input[type="checkbox"]:checked { display: grid; place-items: center; background: var(--blue); }
input[type="checkbox"]:checked::before { content: ""; width: 8px; height: 4px; margin-bottom: 3px; border: solid #fff; border-width: 0 0 2px 2px; transform: rotate(-48deg); }
input[type="checkbox"].light { width: 11px; height: 11px; background: #e6e6e6; }
input[type="checkbox"].light::before { border-color: #222; }

/* timeline */
.timeline { border-radius: 6px; overflow: hidden; flex: none; }
.tl-bar { background: #383838; padding-right: 18px; }
.tlmenus { margin-left: 6px; border: 1px solid #444; background: #444; height: 20px; }
.tlmenus .dd { width: auto; gap: 7px; padding: 0 2px 0 6px; }
.plain { display: flex; gap: 15px; margin-left: 7px; }
.transport { display: flex; gap: 7px; margin: 0 auto; }
.play button { width: 19px; }
.frames { display: flex; gap: 7px; }
.cur { width: 73px; }
.range label { display: flex; align-items: center; width: 86px; padding: 0 13px 0 15px; background: var(--field); }
.range input { flex: 1; width: 30px; text-align: right; font-family: var(--num); }
.ruler { position: relative; height: 40px; background: linear-gradient(#2a2a2a 23px, #404040 23px); }
.marks { display: grid; grid-template-columns: repeat(12, 1fr); height: 100%; padding: 0 34px 0 62px; }
.marks span { text-align: center; line-height: 24px; font-family: var(--num); color: #a8a8a8; background: linear-gradient(#262626, #262626) 50% 23px / 1px 17px no-repeat, linear-gradient(#353535, #353535) 0 23px / 1px 17px no-repeat; }
.marks span:last-child { border-right: 1px solid #151515; }
.playhead { position: absolute; left: 18px; top: 2px; width: 25px; height: 19px; line-height: 19px; text-align: center; background: #5680c2; border-radius: 5px; color: #fff; font-family: var(--num); }
.playhead::after { content: ""; position: absolute; left: 12px; top: 19px; width: 2px; height: 19px; background: #5680c2; }
.scroll { position: absolute; left: 4px; right: 8px; bottom: 2px; height: 8px; display: flex; justify-content: space-between; background: #666; border-radius: 4px; }
.scroll i { width: 8px; height: 8px; border-radius: 50%; background: #4c4c4c; border: 1px solid #777; }
.expand { position: absolute; right: 0; top: 14px; width: 8px; height: 15px; background: #232323; border-radius: 4px 0 0 4px; }

/* outliner */
.outliner { height: 282px; border-radius: 6px; overflow: hidden; display: flex; flex-direction: column; background: #282828; }
.outliner .bar { gap: 6px; padding: 0 0 0 9px; background: #3c3c3c; }
.outliner .dd { flex: none; }
.find { display: flex; align-items: center; height: 19px; flex: 1; margin-left: 11px; padding-left: 3px; background: #1d1d1d; border-radius: 4px 0 0 4px; }
.find input { width: 100%; }
.tree { flex: 1; padding-top: 1px; background: repeating-linear-gradient(#282828 0 20px, #2c2c2c 20px 40px) 0 1px; }
.row { display: flex; align-items: center; height: 20px; color: #c4c4c4; }
.root { padding-left: 22px; gap: 6px; }
.child { padding-left: 25px; gap: 4px; }
.child .light { margin-left: 8px; }
.leaf { padding-left: 46px; gap: 6px; background: #3b5689; color: #f0a138; }
.leaf .tile + span { margin-left: -2px; }
.tile { display: grid; place-items: center; width: 20px; height: 18px; border-radius: 4px; background: #444; color: #ddd; }
.leaf .tile { background: #6d7c9f; }
.leaf .tri { fill: #ddd; }
.data { margin-left: 16px; }
.eye { margin: 0 8px 0 auto; color: #eee; }

/* properties */
.props { flex: 1; min-height: 0; border-radius: 6px; overflow: hidden; display: flex; flex-direction: column; }
.props .bar { padding-left: 9px; background: #383838; }
.ctx { margin: 0 7px 0 13px; }
.pin { margin-left: auto; }
.pmain { flex: 1; display: flex; min-height: 0; }
.ptabs { width: 28px; padding: 8px 0 0 2px; display: flex; flex-direction: column; gap: 1px; }
.ptabs button { height: 27px; justify-content: center; background: #2b2b2b; border-radius: 4px 0 0 4px; color: #c8c8c8; }
.ptabs .gap { margin-top: 8px; }
.ptabs .on { background: var(--header); color: #fff; }
.ptabs .red { color: #cd6870; }
.ptabs .orange { color: #dd8d4d; }
.ptabs .blue { color: #7399d6; }
.panels { flex: 1; min-width: 0; padding-top: 1px; background: var(--header); border-bottom-right-radius: 6px; color: #dcdcdc; }
.panels h2 { display: flex; align-items: center; gap: 6px; height: 24px; padding: 0 7px 0 8px; font-size: 12px; background: var(--header); white-space: nowrap; }
.pbody { display: grid; grid-template-columns: 1fr 77px; column-gap: 9px; align-items: center; padding: 7px 6px 9px 8px; text-align: right; background: #383838; }
.roomy { row-gap: 6px; }
.units { padding: 9px 6px 3px 8px; }
.sep { display: flex; justify-content: flex-end; align-items: center; gap: 9px; height: 19px; padding-right: 9px; background: #383838; }
.tight { row-gap: 3px; padding-top: 6px; }
.slot { height: 19px; padding: 0 2px; background: #1d1d1d; border-radius: 4px; color: #eee; }
.slot .end { margin-left: auto; }

/* status bar */
.status { display: flex; align-items: center; background: #2e2e2e; color: #b0b0b0; padding: 0 0 0 6px; white-space: nowrap; }
.hints { display: flex; gap: 224px; }
.status span { margin-left: auto; font-family: Inter, "Noto Sans CJK JP", sans-serif; }
.mouse { width: 12px; height: 16px; }
.mouse rect { fill: none; stroke: #b5b5b5; }
.mouse .fill { fill: #b5b5b5; }
```
